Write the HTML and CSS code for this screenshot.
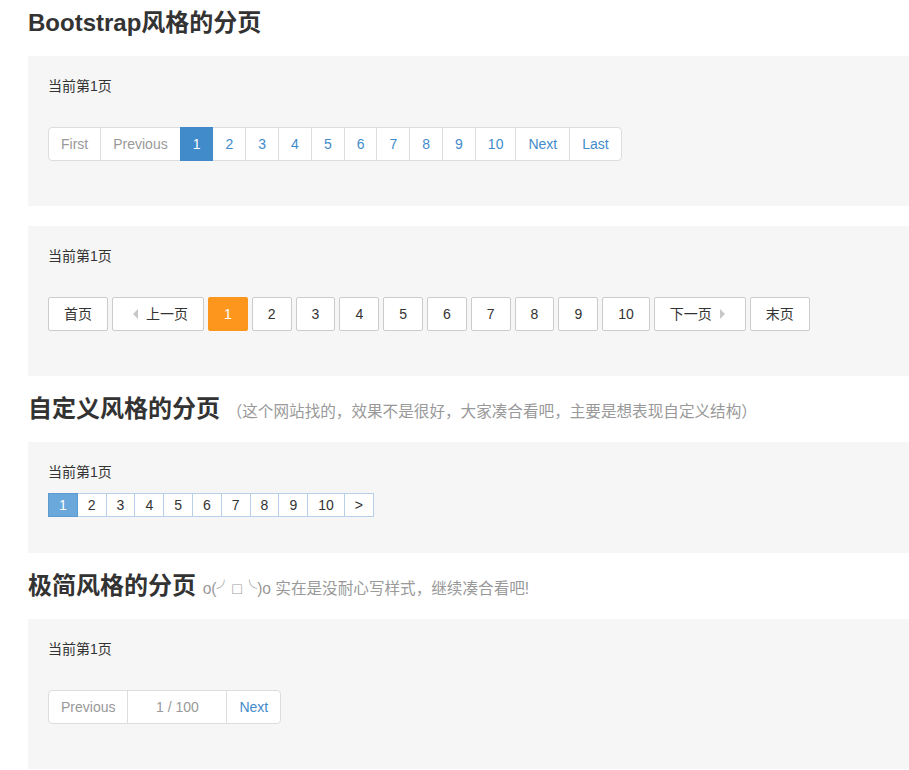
FILE: index.html
```html
<!DOCTYPE html>
<html lang="zh-CN">
<head>
<meta charset="utf-8">
<title>分页</title>
<link rel="stylesheet" href="styles.css">
</head>
<body>
<div class="page">
  <h3 class="title title-first">Bootstrap风格的分页</h3>
  <div class="box">
    <p class="cur">当前第1页</p>
    <ul class="bs-pag">
      <li><a class="disabled" href="#">First</a></li>
      <li><a class="disabled" href="#">Previous</a></li>
      <li><a class="active" href="#">1</a></li>
      <li><a href="#">2</a></li>
      <li><a href="#">3</a></li>
      <li><a href="#">4</a></li>
      <li><a href="#">5</a></li>
      <li><a href="#">6</a></li>
      <li><a href="#">7</a></li>
      <li><a href="#">8</a></li>
      <li><a href="#">9</a></li>
      <li><a href="#">10</a></li>
      <li><a href="#">Next</a></li>
      <li><a href="#">Last</a></li>
    </ul>
  </div>
  <div class="box box-gap">
    <p class="cur">当前第1页</p>
    <div class="btn-pag">
      <a class="btn" href="#">首页</a>
      <a class="btn" href="#"><span class="arrow-left"></span>上一页</a>
      <a class="btn btn-active" href="#">1</a>
      <a class="btn" href="#">2</a>
      <a class="btn" href="#">3</a>
      <a class="btn" href="#">4</a>
      <a class="btn" href="#">5</a>
      <a class="btn" href="#">6</a>
      <a class="btn" href="#">7</a>
      <a class="btn" href="#">8</a>
      <a class="btn" href="#">9</a>
      <a class="btn" href="#">10</a>
      <a class="btn" href="#">下一页<span class="arrow-right"></span></a>
      <a class="btn" href="#">末页</a>
    </div>
  </div>

  <h3 class="title">自定义风格的分页 <small>（这个网站找的，效果不是很好，大家凑合看吧，主要是想表现自定义结构）</small></h3>
  <div class="box box-short">
    <p class="cur cur-tight">当前第1页</p>
    <div class="c-pag">
      <a class="c-active" href="#">1</a>
      <a href="#">2</a>
      <a href="#">3</a>
      <a href="#">4</a>
      <a href="#">5</a>
      <a href="#">6</a>
      <a href="#">7</a>
      <a href="#">8</a>
      <a href="#">9</a>
      <a href="#">10</a>
      <a href="#">&gt;</a>
    </div>
  </div>

  <h3 class="title">极简风格的分页 <small>o(╯□╰)o 实在是没耐心写样式，继续凑合看吧!</small></h3>
  <div class="box">
    <p class="cur">当前第1页</p>
    <div class="pager">
      <a class="p-prev" href="#">Previous</a>
      <span class="p-info">1 / 100</span>
      <a class="p-next" href="#">Next</a>
    </div>
  </div>
</div>
</body>
</html>
```

FILE: styles.css
```css
body {
  margin: 0;
  background: #fff;
  color: #333;
  font-family: "Liberation Sans", "Noto Sans CJK SC", sans-serif;
  font-size: 14px;
  line-height: 20px;
}

a {
  text-decoration: none;
}

.page {
  padding: 10px 0 0 28px;
}

.title {
  margin: 20px 0;
  font-size: 24px;
  line-height: 26px;
  font-weight: bold;
  color: #333;
}

.title-first {
  margin-top: 0;
}

.title small {
  font-size: 15.6px;
  line-height: 1;
  font-weight: normal;
  color: #999;
}

.box {
  box-sizing: border-box;
  height: 150px;
  padding: 20px;
  background: #f6f6f6;
}

.box-gap {
  margin-top: 20px;
}

.box-short {
  height: 111px;
}

.cur {
  margin: 0 0 31px;
}

.cur-tight {
  margin-bottom: 11px;
}

/* Bootstrap style */
.bs-pag {
  display: flex;
  margin: 0;
  padding: 0;
  list-style: none;
}

.bs-pag a {
  position: relative;
  display: block;
  margin-left: -1px;
  padding: 6px 12px;
  line-height: 20px;
  border: 1px solid #ddd;
  background: #fff;
  color: #428bca;
}

.bs-pag li:first-child a {
  margin-left: 0;
  border-radius: 4px 0 0 4px;
}

.bs-pag li:last-child a {
  border-radius: 0 4px 4px 0;
}

.bs-pag a.disabled {
  color: #999;
}

.bs-pag a.active {
  z-index: 2;
  background: #428bca;
  border-color: #428bca;
  color: #fff;
}

/* button style */
.btn-pag {
  display: flex;
  gap: 4px;
}

.btn {
  box-sizing: border-box;
  display: flex;
  align-items: center;
  height: 34px;
  padding: 0 15px;
  border: 1px solid #ccc;
  border-radius: 2px;
  background: #fff;
  color: #333;
}

.btn-active {
  background: #fd961d;
  border-color: #fd961d;
  color: #fff;
}

.arrow-left,
.arrow-right {
  width: 0;
  height: 0;
  border-top: 5px solid transparent;
  border-bottom: 5px solid transparent;
}

.arrow-left {
  margin: 0 8px 0 5px;
  border-right: 5px solid #c8c8c8;
}

.arrow-right {
  margin: 0 5px 0 8px;
  border-left: 5px solid #c8c8c8;
}

/* custom style */
.c-pag {
  display: flex;
}

.c-pag a {
  position: relative;
  display: block;
  margin-left: -1px;
  padding: 0 10px;
  line-height: 22px;
  border: 1px solid #b8cfea;
  background: #fff;
  color: #333;
}

.c-pag a:first-child {
  margin-left: 0;
}

.c-pag a.c-active {
  z-index: 2;
  background: #6aa8dc;
  border-color: #5b9bd1;
  color: #fff;
}

/* minimal pager */
.pager {
  display: flex;
}

.pager a,
.pager span {
  display: block;
  margin-left: -1px;
  padding: 6px 12px;
  line-height: 20px;
  border: 1px solid #ddd;
  background: #fff;
}

.pager .p-prev {
  margin-left: 0;
  border-radius: 4px 0 0 4px;
  color: #999;
}

.pager .p-info {
  box-sizing: border-box;
  width: 100px;
  text-align: center;
  color: #999;
}

.pager .p-next {
  border-radius: 0 4px 4px 0;
  color: #428bca;
}
```
